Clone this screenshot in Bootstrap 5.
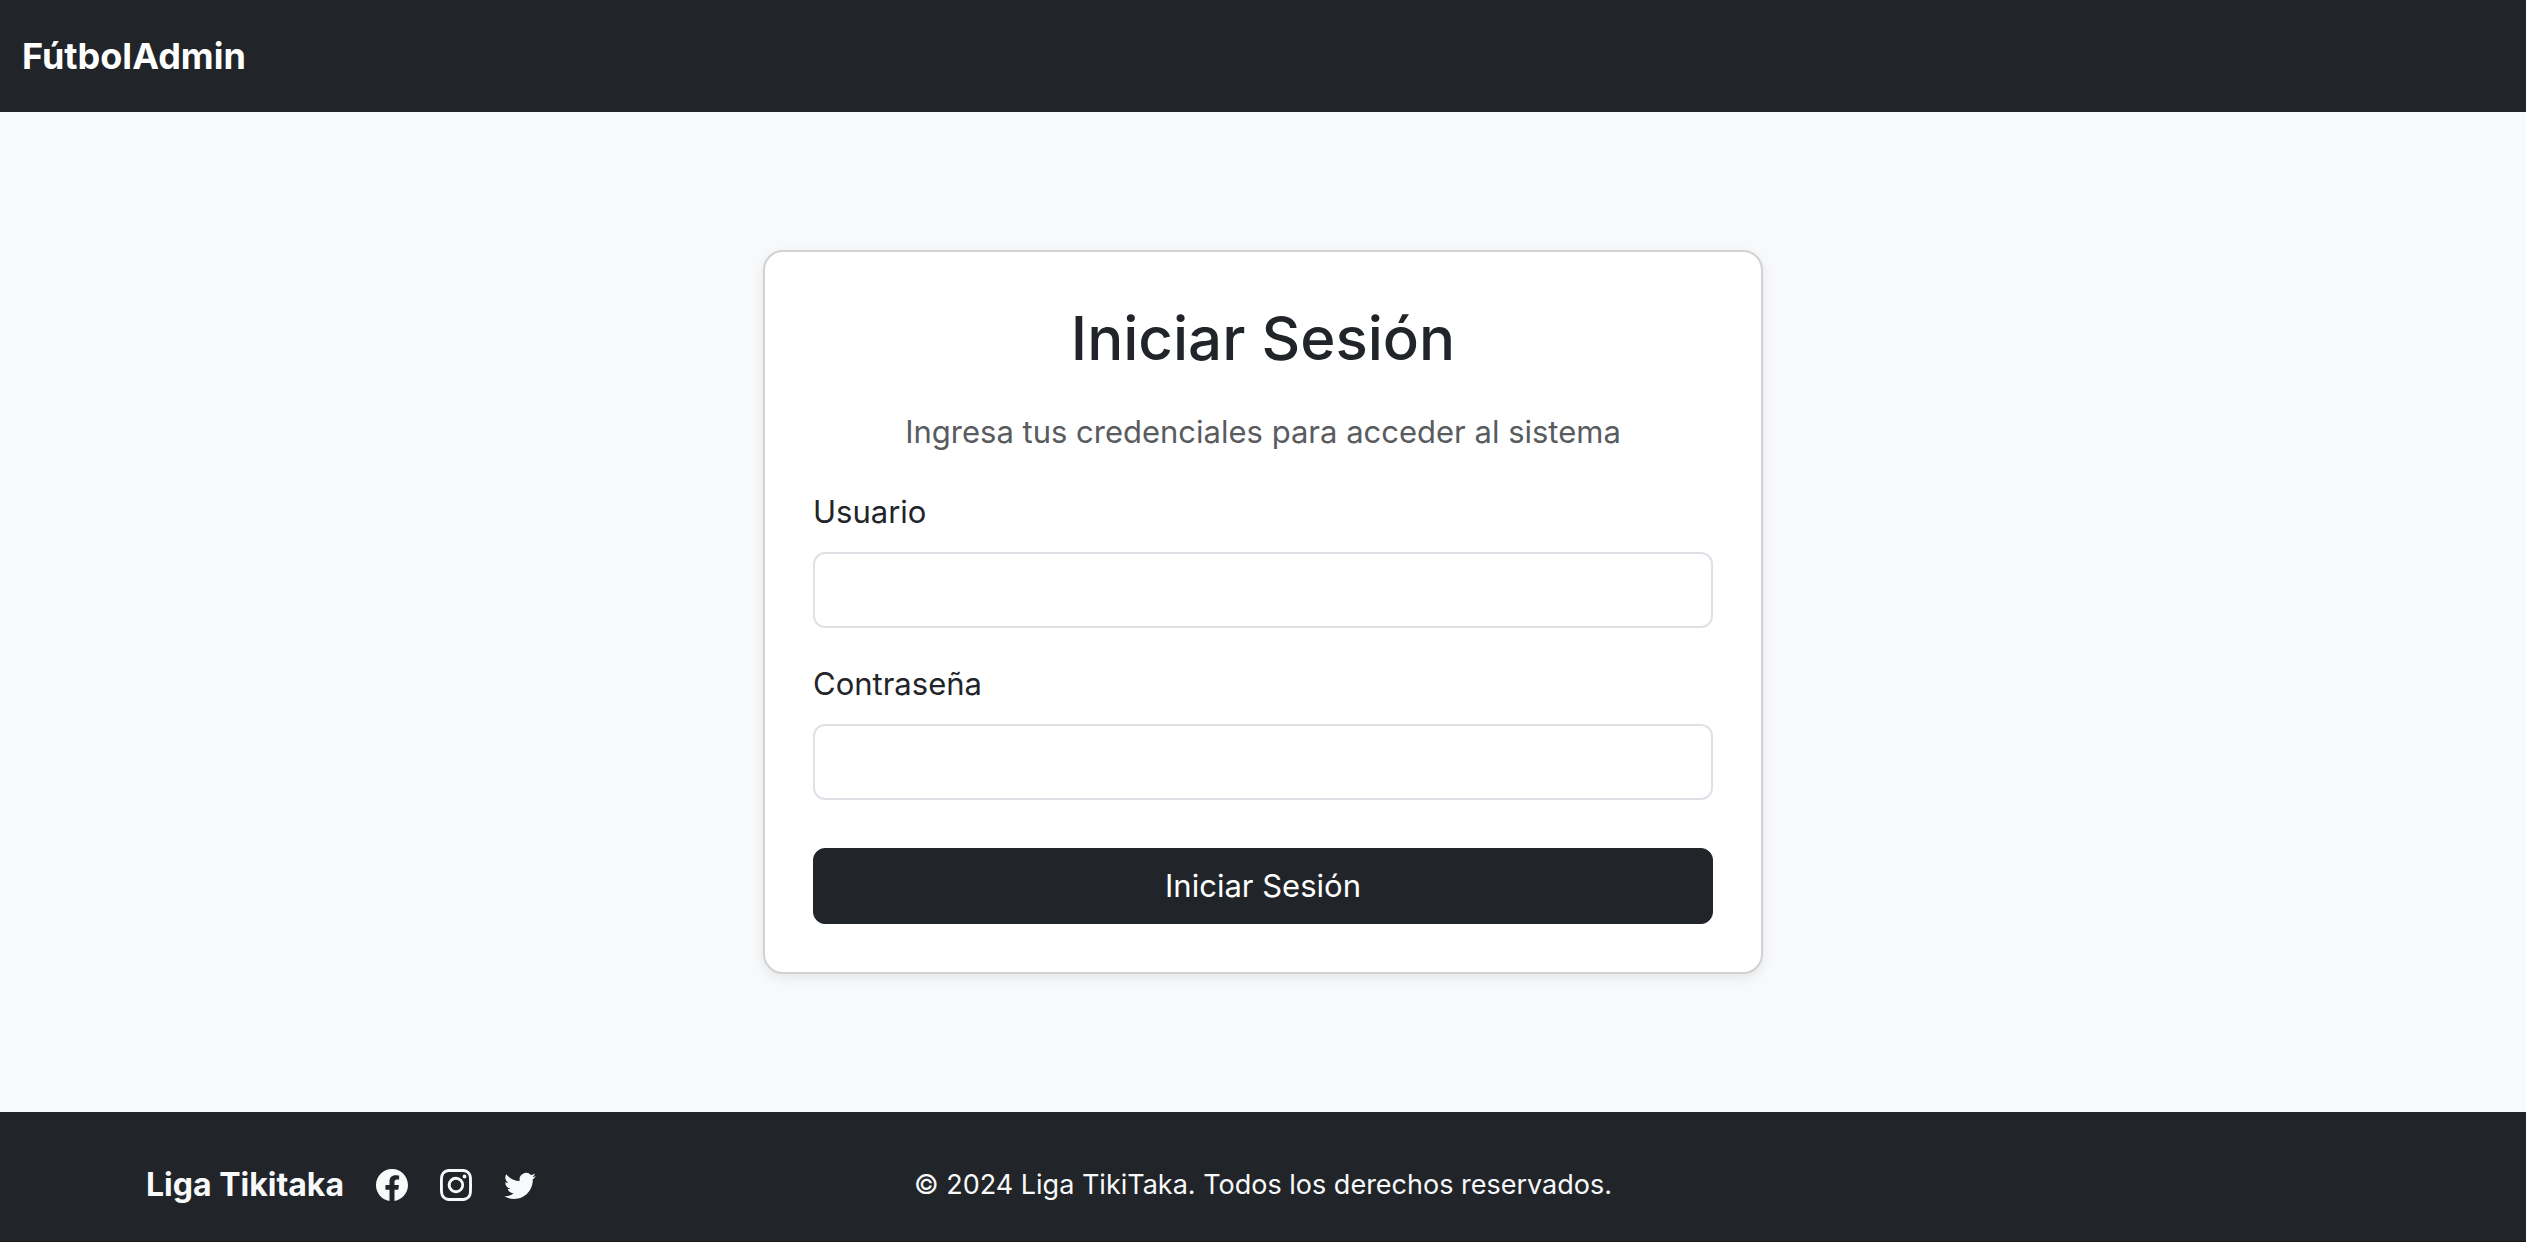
<!DOCTYPE html>
<html lang="es">
<head>
<meta charset="utf-8">
<meta name="viewport" content="width=device-width, initial-scale=1">
<title>FútbolAdmin - Iniciar Sesión</title>
<link href="https://cdn.jsdelivr.net/npm/bootstrap@5.3.0/dist/css/bootstrap.min.css" rel="stylesheet">
<style>
  html { font-size: 32px; }
  body { font-family: Inter, "Liberation Sans", sans-serif; font-size: 31px; line-height: 48px; background: #f8f9fb; color: #212529; }
  .site-brand { font-size: 36px; line-height: 60px; padding: 0; }
  .site-header { padding: 26px 22px; }
  .login-panel { width: 100%; max-width: 1000px; border: 2px solid #d2d2d3; border-radius: 20px; box-shadow: 0 4px 12px rgba(0, 0, 0, .08); }
  .login-panel .card-body { padding: 48px; }
  .login-title { font-size: 60px; line-height: 76px; margin-bottom: 32px; }
  .login-hint { color: #595c5f; margin-bottom: 32px; }
  .login-panel .form-label { margin-bottom: 16px; line-height: 48px; }
  .login-panel .form-control { height: 76px; border: 2px solid #dee2e6; border-radius: 12px; }
  .login-panel .btn { height: 76px; padding: 0; border-radius: 12px; font-size: 31px; }
  .site-footer { padding: 49px 146px 32px; color: #f8f9fa; border-bottom: 1px solid #1a1517; }
  .footer-name { font-size: 32px; }
  .footer-icon { width: 32px; height: 32px; display: block; }
  .footer-note { font-size: 27px; }
</style>
</head>
<body class="d-flex flex-column min-vh-100">
<header class="navbar navbar-dark bg-dark site-header">
  <a class="navbar-brand site-brand fw-bold" href="#">FútbolAdmin</a>
</header>

<main class="flex-grow-1 d-flex align-items-center justify-content-center">
  <div class="card login-panel">
    <div class="card-body">
      <h1 class="login-title fw-medium text-center">Iniciar Sesión</h1>
      <p class="login-hint text-center">Ingresa tus credenciales para acceder al sistema</p>
      <form>
        <div class="mb-3">
          <label class="form-label" for="usuario">Usuario</label>
          <input class="form-control" type="text" id="usuario" name="usuario">
        </div>
        <div class="mb-4">
          <label class="form-label" for="clave">Contraseña</label>
          <input class="form-control" type="password" id="clave" name="clave">
        </div>
        <button class="btn btn-dark w-100" type="submit">Iniciar Sesión</button>
      </form>
    </div>
  </div>
</main>

<footer class="bg-dark site-footer">
  <div class="row g-0 align-items-center">
    <div class="col-4 d-flex align-items-center gap-3">
      <span class="footer-name fw-bold">Liga Tikitaka</span>
      <a class="link-light" href="#" aria-label="Facebook"><svg class="footer-icon" viewBox="0 0 16 16" fill="currentColor"><path d="M16 8.049c0-4.446-3.582-8.05-8-8.05C3.58 0-.002 3.603-.002 8.05c0 4.017 2.926 7.347 6.75 7.951v-5.625h-2.03V8.05H6.75V6.275c0-2.017 1.195-3.131 3.022-3.131.876 0 1.791.157 1.791.157v1.98h-1.009c-.993 0-1.303.621-1.303 1.258v1.51h2.218l-.354 2.326H9.25V16c3.824-.604 6.75-3.934 6.75-7.951z"/></svg></a>
      <a class="link-light" href="#" aria-label="Instagram"><svg class="footer-icon" viewBox="0 0 16 16" fill="currentColor"><path d="M8 0C5.829 0 5.556.01 4.703.048 3.85.088 3.269.222 2.76.42a3.917 3.917 0 0 0-1.417.923A3.927 3.927 0 0 0 .42 2.76C.222 3.268.087 3.85.048 4.7.01 5.555 0 5.827 0 8.001c0 2.172.01 2.444.048 3.297.04.852.174 1.433.372 1.942.205.526.478.972.923 1.417.444.445.89.719 1.416.923.51.198 1.09.333 1.942.372C5.555 15.99 5.827 16 8 16s2.444-.01 3.298-.048c.851-.04 1.434-.174 1.943-.372a3.916 3.916 0 0 0 1.416-.923c.445-.445.718-.891.923-1.417.197-.509.332-1.09.372-1.942C15.99 10.445 16 10.173 16 8s-.01-2.445-.048-3.299c-.04-.851-.175-1.433-.372-1.941a3.926 3.926 0 0 0-.923-1.417A3.911 3.911 0 0 0 13.24.42c-.51-.198-1.092-.333-1.943-.372C10.443.01 10.172 0 7.998 0h.003zm-.717 1.442h.718c2.136 0 2.389.007 3.232.046.78.035 1.204.166 1.486.275.373.145.64.319.92.599.28.28.453.546.598.92.11.281.24.705.275 1.485.039.843.047 1.096.047 3.231s-.008 2.389-.047 3.232c-.035.78-.166 1.203-.275 1.485a2.47 2.47 0 0 1-.599.919c-.28.28-.546.453-.92.598-.28.11-.704.24-1.485.276-.843.038-1.096.047-3.232.047s-2.39-.009-3.233-.047c-.78-.036-1.203-.166-1.485-.276a2.478 2.478 0 0 1-.92-.598 2.48 2.48 0 0 1-.6-.92c-.109-.281-.24-.705-.275-1.485-.038-.843-.046-1.096-.046-3.233 0-2.136.008-2.388.046-3.231.036-.78.166-1.204.276-1.486.145-.373.319-.64.599-.92.28-.28.546-.453.92-.598.282-.11.705-.24 1.485-.276.738-.034 1.024-.044 2.515-.045v.002zm4.988 1.328a.96.96 0 1 0 0 1.92.96.96 0 0 0 0-1.92zm-4.27 1.122a4.109 4.109 0 1 0 0 8.217 4.109 4.109 0 0 0 0-8.217zm0 1.441a2.667 2.667 0 1 1 0 5.334 2.667 2.667 0 0 1 0-5.334z"/></svg></a>
      <a class="link-light" href="#" aria-label="Twitter"><svg class="footer-icon" viewBox="0 0 16 16" fill="currentColor"><path d="M5.026 15c6.038 0 9.341-5.003 9.341-9.334 0-.14 0-.282-.006-.422A6.685 6.685 0 0 0 16 3.542a6.658 6.658 0 0 1-1.889.518 3.301 3.301 0 0 0 1.447-1.817 6.533 6.533 0 0 1-2.087.793A3.286 3.286 0 0 0 7.875 6.03a9.325 9.325 0 0 1-6.767-3.429 3.289 3.289 0 0 0 1.018 4.382A3.323 3.323 0 0 1 .64 6.575v.045a3.288 3.288 0 0 0 2.632 3.218 3.203 3.203 0 0 1-.865.115 3.23 3.23 0 0 1-.614-.057 3.283 3.283 0 0 0 3.067 2.277A6.588 6.588 0 0 1 .78 13.58a6.32 6.32 0 0 1-.78-.045A9.344 9.344 0 0 0 5.026 15z"/></svg></a>
    </div>
    <div class="col-4 text-center footer-note">© 2024 Liga TikiTaka. Todos los derechos reservados.</div>
  </div>
</footer>
<script src="https://cdn.jsdelivr.net/npm/bootstrap@5.3.0/dist/js/bootstrap.bundle.min.js"></script>
</body>
</html>
